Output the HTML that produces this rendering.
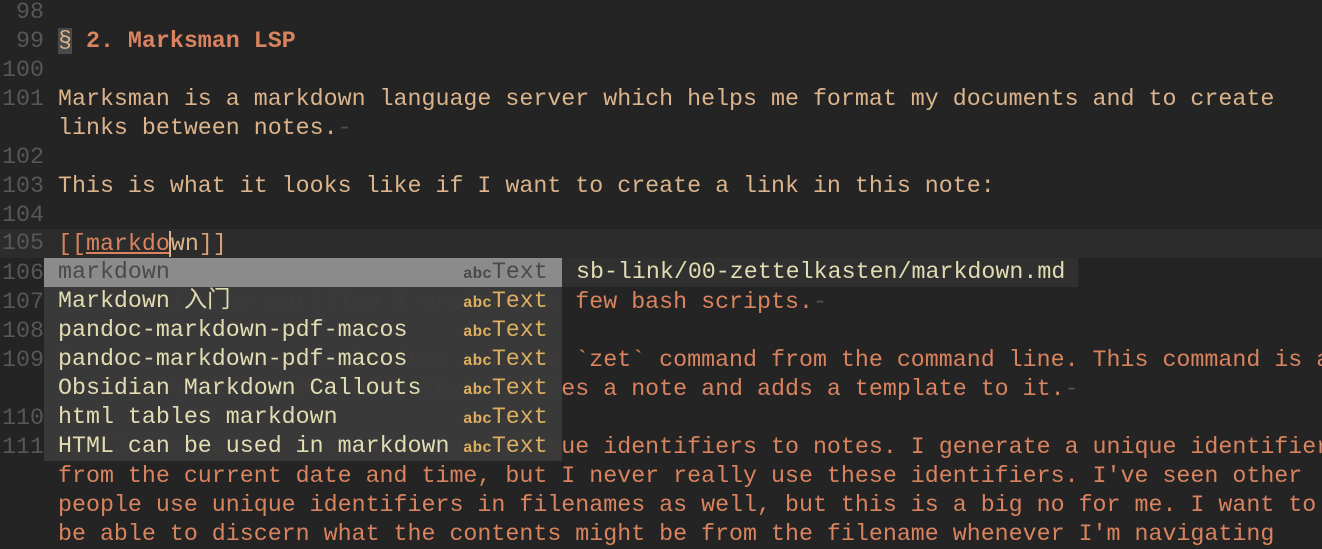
<!DOCTYPE html>
<html><head><meta charset="utf-8"><style>
html,body{margin:0;padding:0;width:1322px;height:546px;overflow:hidden;background:#242424;}
body{font-family:"Liberation Mono","Noto Sans CJK SC",monospace;font-size:23.3px;}
.r{position:absolute;left:0;width:1322px;height:29px;line-height:29px;white-space:pre;}
.n{position:absolute;left:0;width:44px;text-align:right;color:#575757;}
.t{position:absolute;left:58px;color:#dcb48c;}
.o{color:#d9835f;}
.e{color:#505050;}
.cur{background:#2c2c2c;}
#pop{position:absolute;left:44px;top:258px;width:518px;height:203px;background:rgba(58,58,58,0.985);}
.p{position:absolute;left:0;width:518px;height:29px;line-height:29px;white-space:pre;color:#e2dcb2;}
.p .w{position:absolute;left:14px;}
.p .k{position:absolute;left:419px;color:#dcae5e;}
.p .k small{font-size:16px;font-weight:bold;}
.sel{background:#8b8b8b;color:#4a4a4a !important;}
.sel .k{color:#4a4a4a;}
#doc{position:absolute;left:562px;top:258px;width:516px;height:29px;line-height:29px;background:#303030;color:#e2dcb2;white-space:pre;}
</style></head><body>
<div class="r" style="top:-2px"><span class="n">98</span></div>
<div class="r" style="top:27px"><span class="n">99</span><span class="t"><span style="background:#4a4a4a">§</span> <b class="o">2. Marksman LSP</b></span></div>
<div class="r" style="top:56px"><span class="n">100</span></div>
<div class="r" style="top:85px"><span class="n">101</span><span class="t">Marksman is a markdown language server which helps me format my documents and to create</span></div>
<div class="r" style="top:114px"><span class="t">links between notes.<span class="e">-</span></span></div>
<div class="r" style="top:143px"><span class="n">102</span></div>
<div class="r" style="top:172px"><span class="n">103</span><span class="t">This is what it looks like if I want to create a link in this note:</span></div>
<div class="r" style="top:201px"><span class="n">104</span></div>
<div class="r cur" style="top:229px"><span class="n">105</span><span class="t" style="top:1px"><span class="o">[[<u>markdo</u></span><span style="border-left:2px solid #dcb48c;margin-left:-1px"></span>wn<span style="color:#d9a07a">]]</span></span></div>
<div class="r" style="top:259px"><span class="n">106</span></div>
<div class="r" style="top:288px"><span class="n">107</span><span class="t o">To simplify my workflow I wrote some few bash scripts.<span class="e">-</span></span></div>
<div class="r" style="top:317px"><span class="n">108</span></div>
<div class="r" style="top:346px"><span class="n">109</span><span class="t o">To create new notes, I often use the `zet` command from the command line. This command is a</span></div>
<div class="r" style="top:375px"><span class="t o">a tiny shell script which then creates a note and adds a template to it.<span class="e">-</span></span></div>
<div class="r" style="top:404px"><span class="n">110</span></div>
<div class="r" style="top:433px"><span class="n">111</span><span class="t o">The Zettelkasten method assigns unique identifiers to notes. I generate a unique identifier</span></div>
<div class="r" style="top:462px"><span class="t o">from the current date and time, but I never really use these identifiers. I've seen other</span></div>
<div class="r" style="top:491px"><span class="t o">people use unique identifiers in filenames as well, but this is a big no for me. I want to</span></div>
<div class="r" style="top:520px"><span class="t o">be able to discern what the contents might be from the filename whenever I'm navigating</span></div>

<div id="pop">
<div class="p sel" style="top:0"><span class="w">markdown</span><span class="k"><small>abc</small>Text</span></div>
<div class="p" style="top:29px"><span class="w">Markdown 入门</span><span class="k"><small>abc</small>Text</span></div>
<div class="p" style="top:58px"><span class="w">pandoc-markdown-pdf-macos</span><span class="k"><small>abc</small>Text</span></div>
<div class="p" style="top:87px"><span class="w">pandoc-markdown-pdf-macos</span><span class="k"><small>abc</small>Text</span></div>
<div class="p" style="top:116px"><span class="w">Obsidian Markdown Callouts</span><span class="k"><small>abc</small>Text</span></div>
<div class="p" style="top:145px"><span class="w">html tables markdown</span><span class="k"><small>abc</small>Text</span></div>
<div class="p" style="top:174px"><span class="w">HTML can be used in markdown</span><span class="k"><small>abc</small>Text</span></div>
</div>
<div id="doc"> sb-link/00-zettelkasten/markdown.md</div>
</body></html>
